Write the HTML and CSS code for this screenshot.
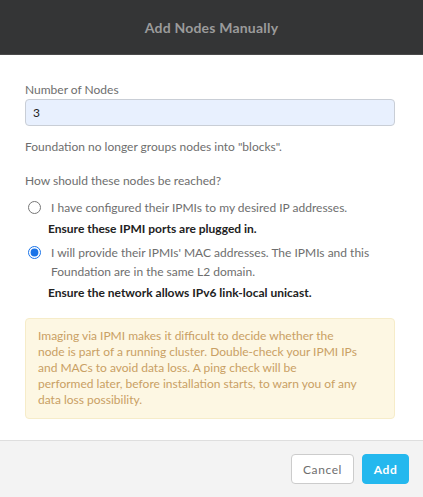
FILE: index.html
```html
<!DOCTYPE html>
<html>
<head>
<meta charset="utf-8">
<link rel="stylesheet" href="styles.css">
</head>
<body>
<div class="modal">
  <div class="header">Add Nodes Manually</div>
  <div class="content">
    <div class="label">Number of Nodes</div>
    <div class="input">3</div>
    <p class="note">Foundation no longer groups nodes into "blocks".</p>
    <p class="question">How should these nodes be reached?</p>
    <label class="option">
      <input type="radio" name="reach">
      <span class="opt-text">I have configured their IPMIs to my desired IP addresses.</span>
    </label>
    <div class="hint">Ensure these IPMI ports are plugged in.</div>
    <label class="option second">
      <input type="radio" name="reach" checked>
      <span class="opt-text">I will provide their IPMIs' MAC addresses. The IPMIs and this Foundation are in the same L2 domain.</span>
    </label>
    <div class="hint">Ensure the network allows IPv6 link-local unicast.</div>
    <div class="warning">Imaging via IPMI makes it difficult to decide whether the<br>node is part of a running cluster. Double-check your IPMI IPs<br>and MACs to avoid data loss. A ping check will be<br>performed later, before installation starts, to warn you of any<br>data loss possibility.</div>
  </div>
  <div class="footer">
    <button class="btn btn-cancel">Cancel</button>
    <button class="btn btn-add">Add</button>
  </div>
</div>
</body>
</html>
```
FILE: styles.css
```css
html, body {
  margin: 0;
  padding: 0;
  background: #fff;
}
body {
  font-family: Lato, "Open Sans", sans-serif;
  font-size: 12px;
  color: #6e6e6e;
}
.modal {
  width: 423px;
  height: 497px;
  display: flex;
  flex-direction: column;
}
.header {
  height: 54px;
  flex: none;
  background: #343536;
  border-bottom: 1px solid #4a4a4a;
  color: #9b9b9b;
  font-weight: 700;
  font-size: 14px;
  display: flex;
  align-items: center;
  justify-content: center;
  letter-spacing: 0.2px;
}
.content {
  flex: 1;
  padding: 26px 28px 0 25px;
}
.label {
  line-height: 18px;
}
.input {
  height: 25px;
  border: 1px solid #c9ced6;
  border-radius: 4px;
  background: #e8f0fe;
  color: #222;
  padding-left: 7px;
  line-height: 25px;
}
.note {
  margin: 12px 0 0;
  line-height: 18px;
}
.question {
  margin: 16px 0 0;
  line-height: 18px;
}
.option {
  display: flex;
  align-items: flex-start;
  margin-top: 8px;
  line-height: 19px;
}
.option.second {
  margin-top: 5px;
}
.option input {
  margin: 3px 10px 0 3px;
  width: 13px;
  height: 13px;
  accent-color: #1a73e8;
  flex: none;
}
.opt-text {
  padding-right: 18px;
}
.hint {
  color: #222;
  font-weight: 700;
  padding-left: 23px;
  line-height: 19px;
  margin-top: 2px;
}
.warning {
  margin-top: 16px;
  background: #fdf7e3;
  border: 1px solid #f6ecc9;
  border-radius: 4px;
  color: #c9a063;
  padding: 9px 4px 10px 12px;
  line-height: 16px;
  font-size: 12px;
  white-space: nowrap;
}
.footer {
  height: 56px;
  flex: none;
  border-top: 1px solid #dedede;
  background: #f3f3f3;
  display: flex;
  align-items: center;
  justify-content: flex-end;
  gap: 8px;
  padding-right: 14px;
}
.btn {
  height: 30px;
  border-radius: 4px;
  font-family: inherit;
  font-size: 12px;
  cursor: pointer;
  padding: 0;
}
.btn-cancel {
  width: 63px;
  background: #fff;
  border: 1px solid #ccc;
  color: #6e6e6e;
  letter-spacing: 0.6px;
}
.btn-add {
  width: 47px;
  background: #24b8ee;
  border: 1px solid #24b8ee;
  color: #fff;
  font-weight: 700;
  letter-spacing: 0.6px;
}
```
